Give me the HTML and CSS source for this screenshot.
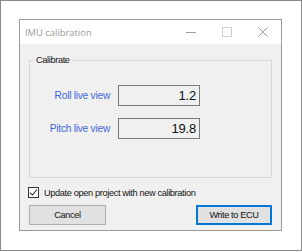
FILE: index.html
```html
<!DOCTYPE html>
<html lang="en">
<head>
  <meta charset="UTF-8">
  <title>IMU calibration</title>
  <link rel="stylesheet" href="styles.css">
</head>
<body>

  <div class="frame">
    <div class="window">
      <div class="titlebar">
        <span class="title">IMU calibration</span>
        <div class="controls">
          <span class="ctl">
            <svg width="10" height="10" viewBox="0 0 10 10"><path d="M0 5.5h10" stroke="#a0a0a0" fill="none"/></svg>
          </span>
          <span class="ctl">
            <svg width="10" height="10" viewBox="0 0 10 10"><rect x="0.5" y="0.5" width="9" height="9" stroke="#d0d0d0" fill="none"/></svg>
          </span>
          <span class="ctl">
            <svg width="10" height="10" viewBox="0 0 10 10"><path d="M0.5 0.5l9 9M9.5 0.5l-9 9" stroke="#999" fill="none"/></svg>
          </span>
        </div>
      </div>

      <div class="client">
        <fieldset class="group">
          <legend>Calibrate</legend>
          <div class="rows">
            <label class="live-label">Roll live view</label>
            <div class="readout">1.2</div>
            <label class="live-label">Pitch live view</label>
            <div class="readout">19.8</div>
          </div>
        </fieldset>

        <label class="check-row">
          <span class="checkbox">
            <svg width="9" height="9" viewBox="0 0 9 9"><path d="M1 4.5l2.3 2.5L8 1.5" stroke="#222" stroke-width="1.1" fill="none"/></svg>
          </span>
          Update open project with new calibration
        </label>

        <div class="buttons">
          <button class="btn">Cancel</button>
          <button class="btn btn-default">Write to ECU</button>
        </div>
      </div>
    </div>
  </div>

</body>
</html>
```

FILE: styles.css
```css
body {
  margin: 0;
  font-family: "Liberation Sans", Arial, sans-serif;
  background-color: white;
}

.frame {
  width: 302px;
  height: 251px;
  box-sizing: border-box;
  border: 1px solid #8a8a8a;
  padding: 18px 0 0 18px;
}

.window {
  width: 263px;
  height: 212px;
  box-sizing: border-box;
  border: 1px solid #9a9a9a;
  display: flex;
  flex-direction: column;
}

.titlebar {
  height: 24px;
  background-color: white;
  display: flex;
  align-items: center;
}

.title {
  flex: 1;
  padding-left: 5px;
  font-family: "Open Sans", sans-serif;
  font-size: 9.4px;
  color: #9a9a9a;
}

.controls {
  display: flex;
  height: 100%;
}

.ctl {
  width: 36px;
  display: flex;
  align-items: center;
  justify-content: center;
}

.client {
  flex: 1;
  background-color: #f0f0f0;
  padding: 10px 9px 0 9px;
  font-size: 9.2px;
  letter-spacing: -0.35px;
  color: #111;
}

.group {
  margin: 0;
  min-width: 0;
  padding: 19px 0 38px 0;
  border: 1px solid #d8d8d8;
}

.group legend {
  margin-left: 4px;
  padding: 0 2px;
  line-height: 12px;
}

.rows {
  display: grid;
  grid-template-columns: 80px 82px;
  column-gap: 8px;
  row-gap: 12px;
  align-items: center;
}

.live-label {
  text-align: right;
  font-size: 10.2px;
  letter-spacing: -0.25px;
  color: #3d68dc;
}

.readout {
  height: 21px;
  box-sizing: border-box;
  border: 1px solid #7a7a7a;
  background-color: #f0f0f0;
  text-align: right;
  padding-right: 3px;
  font-size: 13px;
  letter-spacing: -0.2px;
  line-height: 19px;
  color: #111;
}

.check-row {
  display: flex;
  align-items: center;
  margin: 8px 0 0 -1px;
  height: 13px;
}

.checkbox {
  width: 11px;
  height: 11px;
  box-sizing: border-box;
  border: 1px solid #333;
  background-color: white;
  margin-right: 5px;
  display: flex;
  align-items: center;
  justify-content: center;
}

.buttons {
  display: flex;
  justify-content: space-between;
  margin-top: 6px;
}

.btn {
  width: 77px;
  height: 20px;
  box-sizing: border-box;
  background-color: #e1e1e1;
  border: 1px solid #adadad;
  font-family: "Liberation Sans", Arial, sans-serif;
  font-size: 9.2px;
  letter-spacing: -0.35px;
  color: #111;
  padding: 0;
}

.btn-default {
  width: 76px;
  border: 2px solid #0078d7;
}
```
